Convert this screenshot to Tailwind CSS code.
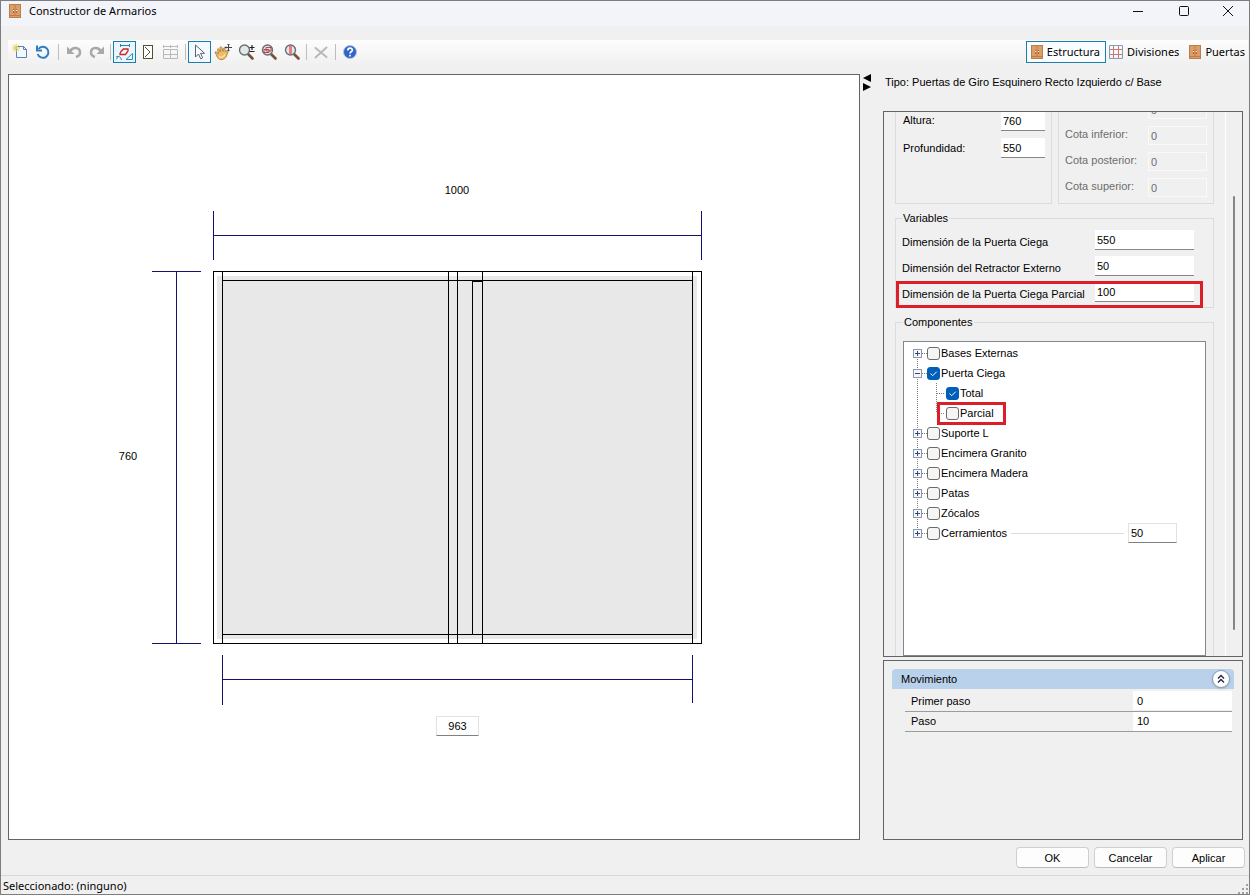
<!DOCTYPE html>
<html lang="es">
<head>
<meta charset="utf-8">
<title>Constructor de Armarios</title>
<script src="https://cdn.jsdelivr.net/npm/@tailwindcss/browser@4"></script>
</head>
<body class="h-screen overflow-hidden bg-[#f0f0f0] text-black font-['Liberation_Sans',sans-serif] text-[11px] leading-4">
<svg width="0" height="0" class="absolute">
  <defs>
    <symbol id="wardrobe" viewBox="0 0 12 16">
      <rect x=".5" y="1.5" width="11" height="13" fill="#dd9d66" stroke="#b87f4e"/>
      <path d="M6 2v10M1 12.5h10" stroke="#c07c48"/>
      <path d="M4.500 6v4M7.500 6v4" stroke="#a9683a"/>
      <path d="M4 7.500h1M7 7.500h1" stroke="#fff"/>
    </symbol>
    <symbol id="lens" viewBox="0 0 18 18">
      <path d="M11.500 11.500l4 4" stroke="#75503a" stroke-width="2.600" stroke-linecap="round"/>
      <circle cx="7.500" cy="7" r="5" fill="#dfe9ec" stroke="#6a6e70" stroke-width="1.400"/>
    </symbol>
  </defs>
</svg>
<div class="flex h-full flex-col border border-[#7d7d7d]">
  <header class="flex h-[25px] shrink-0 items-center bg-[#f2f4fa] pl-2 font-['Noto_Sans',sans-serif] text-[11px]">
    <svg class="mb-[6px] h-4 w-3"><use href="#wardrobe"/></svg>
    <h1 class="mb-[6px] ml-2">Constructor de Armarios</h1>
    <div class="mb-[6px] ml-auto flex">
      <button aria-label="Minimizar" class="flex w-[46px] justify-center"><svg width="12" height="12" stroke="#111" fill="none"><path d="M1 6.500h10"/></svg></button>
      <button aria-label="Maximizar" class="flex w-[45px] justify-center"><svg width="12" height="12" stroke="#111" fill="none"><rect x="1.500" y="1.500" width="9" height="9" rx="1"/></svg></button>
      <button aria-label="Cerrar" class="flex w-[43px] justify-center"><svg width="12" height="12" stroke="#111" fill="none"><path d="M1 1l10 10M11 1L1 11"/></svg></button>
    </div>
  </header>

  <nav class="ml-[7px] mr-px mt-[14px] flex h-[24px] shrink-0 items-center bg-linear-to-b from-[#fdfdfd] to-[#f1f1f1]" aria-label="Herramientas">
    <button aria-label="Nuevo" class="flex h-[22px] w-[23px] items-center justify-center"><svg width="16" height="16" fill="none"><path d="M4.500 2.500h7l3 3v8h-10z" fill="#f3f8fd" stroke="#5b84b5"/><path d="M11.500 2.500v3h3" stroke="#5b84b5"/><path d="M4 0v8M0 4h8M1 1l6 6M7 1L1 7" stroke="#e3cf45"/></svg></button>
    <button aria-label="Actualizar" class="flex h-[22px] w-[23px] items-center justify-center"><svg width="16" height="16" fill="none" stroke="#2b7fc4" stroke-width="2"><path d="M3.500 5a5.500 5.500 0 1 1-.8 5"/><path d="M2 1.500v5h5"/></svg></button>
    <span class="flex h-4 w-[8px] justify-center"><i class="w-px bg-[#bdbdbd]"></i></span>
    <button aria-label="Deshacer" class="flex h-[22px] w-[23px] items-center justify-center"><svg width="16" height="16" fill="none" stroke="#a9a9a9" stroke-width="2.500"><path d="M4 7.500C7 2 14 3.500 14 8.500c0 2-1.500 3.700-4 4.500"/><path d="M1 2.500v7.500h7.500z" fill="#a9a9a9" stroke="none"/></svg></button>
    <button aria-label="Rehacer" class="flex h-[22px] w-[23px] items-center justify-center"><svg width="16" height="16" fill="none" stroke="#a9a9a9" stroke-width="2.500"><path d="M12 7.500C9 2 2 3.500 2 8.500c0 2 1.500 3.700 4 4.500"/><path d="M15 2.500v7.500H7.500z" fill="#a9a9a9" stroke="none"/></svg></button>
    <span class="flex h-4 w-[5px] justify-center"><i class="w-px bg-[#bdbdbd]"></i></span>
    <button aria-label="Cotas" aria-pressed="true" class="flex h-[22px] w-[23px] items-center justify-center border border-[#1a7fae] bg-[#eaf6fb]"><svg width="18" height="18" fill="none"><path d="M4.500 1v3M13.500 1v3M4.500 2.500h9" stroke="#2a7fb8"/><path d="M4 10.500l1-2L7.500 6H12v2l-2.500 3.500H4z" stroke="#d02525" stroke-width="1.300"/><path d="M0 14c3-1.500 5 0 5.500 3M0 16.500l2.500-3M10 16.500h6.500v-6z" stroke="#2a8fb8"/></svg></button>
    <button aria-label="Puerta" class="flex h-[22px] w-[23px] items-center justify-center"><svg width="12" height="16" fill="none"><rect x="1.500" y="1.500" width="9" height="13" fill="#fff" stroke="#4d5230"/><path d="M3 3l5 5-5 5" stroke="#4d5230"/></svg></button>
    <button aria-label="Cuadrícula" class="flex h-[22px] w-[23px] items-center justify-center"><svg width="17" height="17" fill="none" stroke="#b9b9b9"><path d="M1.500 5.500h14v9h-14zM8.500 5v10M1.500 10.500h14M1 2.500h15M1.500 1v3M8.500 1v3M15.500 1v3"/></svg></button>
    <span class="flex h-4 w-[6px] justify-center"><i class="w-px bg-[#bdbdbd]"></i></span>
    <button aria-label="Seleccionar" aria-pressed="true" class="flex h-[22px] w-[23px] items-center justify-center border border-[#1a7fae] bg-[#f3fafd]"><svg width="12" height="18" fill="#fff" stroke="#5a6080"><path d="M1.500 2v12l3-3 2.200 4.800 2-1L6.500 10.300h4z"/></svg></button>
    <button aria-label="Mover vista" class="flex h-[22px] w-[23px] items-center justify-center"><svg width="18" height="18" fill="none"><path d="M1 9c1.500-.6 2.500.6 3.500 2L3.500 6.500c0-1 1.200-1.200 1.600-.2L6.500 9 6 4.500c.2-1 1.500-1 1.800 0L9 8.500l.2-3c.5-1 1.500-.7 1.600.3L11.500 9l1.200-1.500c1-.6 1.800.2 1.400 1.200L12.500 13c-1.500 4-7 5-9 1.500C2.500 13 2 10.500 1 9z" fill="#edbd6a" stroke="#a8752f" stroke-width=".8"/><path d="M5 13.500c2 1.500 5 .5 6-2" stroke="#fbe6b4" stroke-width="1.300"/><path d="M14.500 1v7M11 4.500h7M13.500 2l1-1 1 1M13.500 7l1 1 1-1M12 3.500l-1 1 1 1" stroke="#444"/></svg></button>
    <button aria-label="Acercar o alejar" class="flex h-[22px] w-[23px] items-center justify-center"><svg width="18" height="18"><use href="#lens"/><path d="M12.500 4.500h5M15 2v5M12.500 8.500h5" stroke="#222" stroke-width="1.200"/></svg></button>
    <button aria-label="Ampliar ventana" class="flex h-[22px] w-[23px] items-center justify-center"><svg width="18" height="18"><use href="#lens"/><path d="M6 4.500h5v3.500H6zM4 6.500h5v3H4z" fill="#f4dede" stroke="#b5484e"/></svg></button>
    <button aria-label="Ampliar todo" class="flex h-[22px] w-[23px] items-center justify-center"><svg width="18" height="18"><use href="#lens"/><path d="M6 3h3v8H6z" fill="#ec7d7d"/></svg></button>
    <span class="flex h-4 w-[6px] justify-center"><i class="w-px bg-[#bdbdbd]"></i></span>
    <button aria-label="Eliminar" class="flex h-[22px] w-[23px] items-center justify-center"><svg width="16" height="16" stroke="#b9b9b9" stroke-width="2" stroke-linecap="round"><path d="M2.500 4l11 9M13.500 3.500l-11 10"/></svg></button>
    <span class="flex h-4 w-[6px] justify-center"><i class="w-px bg-[#bdbdbd]"></i></span>
    <button aria-label="Ayuda" class="flex h-[22px] w-[23px] items-center justify-center"><svg width="16" height="16" fill="none"><circle cx="8" cy="8" r="6.500" fill="#2f64c8" stroke="#b4c3e0"/><path d="M5.800 6.500c0-3 4.600-3 4.600-.4C10.400 7.800 8 7.800 8 9.600M8 10.800v1.700" stroke="#fff" stroke-width="1.700"/></svg></button>
    <div class="ml-auto flex items-center gap-[2px] font-['Noto_Sans',sans-serif] text-[11px]">
      <button aria-pressed="true" class="flex h-[22px] items-center gap-1 border border-[#1a7fae] bg-[#fafdff] pl-1 pr-[5px]"><svg class="h-4 w-3"><use href="#wardrobe"/></svg>Estructura</button>
      <button class="flex h-[22px] items-center gap-1 px-px"><svg width="14" height="14" fill="none"><path d="M4.500 1v12M9.500 1v12M1 4.500h12M1 9.500h12" stroke="#cf7777"/><path d="M.5 .5h13v13H.5z" stroke="#7f9fc0"/></svg>Divisiones</button>
      <button class="ml-[7px] flex h-[22px] items-center gap-1 pr-[3px]"><svg class="h-4 w-3"><use href="#wardrobe"/></svg>Puertas</button>
    </div>
  </nav>

  <main class="mt-[10px] flex min-h-0 grow pl-[7px] pr-[6px]">
    <section class="relative min-w-0 grow border border-[#646464] bg-white" aria-label="Vista frontal">
      <svg class="block h-full w-full" fill="none" shape-rendering="crispEdges">
        <path d="M208 201h480v363H208z" fill="#e8e8e8"/>
        <g stroke="#000">
          <path d="M204.500 196.500h488v372h-488zM213.500 196.500v372M683.500 196.500v372M213.500 205.500h470M213.500 559.500h470"/>
          <path d="M439.500 196.500v372M448.500 196.500v372M473.500 196.500v372M463.500 559.500v-353h10"/>
        </g>
        <g stroke="#12126e">
          <path d="M204.500 136v49M692.500 136v49M204.500 160.500h488"/>
          <path d="M143 196.500h49M143 568.500h49M167.500 196.500v372"/>
          <path d="M213.500 580v50M683.500 580v48M213.500 604.500h470"/>
        </g>
        <g fill="#000" font-size="11" text-anchor="middle">
          <text x="448" y="119">1000</text>
          <text x="119" y="385">760</text>
        </g>
      </svg>
      <input aria-label="Anchura útil" value="963" class="absolute left-[427px] top-[641px] h-5 w-[43px] border border-[#e2e2e2] border-b-[#808080] bg-white text-center">
    </section>

    <div class="flex w-[23px] shrink-0 flex-col items-start pl-[2px]" aria-hidden="true">
      <svg width="10" height="18" fill="#000"><path d="M9 0v8L1 4zM1 9v8l8-4z"/></svg>
    </div>

    <aside class="flex w-[360px] shrink-0 flex-col">
      <p class="h-[37px] shrink-0 pl-[2px]">Tipo: Puertas de Giro Esquinero Recto Izquierdo c/ Base</p>
      <form class="flex min-h-0 grow overflow-hidden border border-[#646464] pl-[11px]">
        <div class="flex min-w-0 grow flex-col pr-[11px]">
          <div class="flex h-[92px] shrink-0 gap-[6px]">
            <div class="flex flex-1 flex-col gap-[7px] border-x border-b border-[#dcdcdc] pl-[7px] pr-[6px]">
              <div class="flex h-[19px] items-start justify-between"><label for="alt">Altura:</label><input id="alt" value="760" class="h-[19px] w-11 border-b border-[#868686] bg-white px-[2px]"></div>
              <div class="flex h-5 items-center justify-between"><label for="prof">Profundidad:</label><input id="prof" value="550" class="h-5 w-11 border-b border-[#868686] bg-white px-[2px]"></div>
            </div>
            <div class="flex flex-1 flex-col gap-[7px] border-x border-b border-[#dcdcdc] pl-[6px] pr-[6px] text-[#6d6d6d]">
              <div class="flex h-[7px] items-end justify-end overflow-hidden"><input aria-label="Cota lateral" disabled value="0" class="h-[19px] w-[59px] shrink-0 border border-[#fafafa] px-[2px]"></div>
              <div class="flex h-[19px] items-start justify-between"><label for="c1">Cota inferior:</label><input id="c1" disabled value="0" class="h-[19px] w-[59px] border border-[#fafafa] px-[2px]"></div>
              <div class="flex h-[19px] items-start justify-between"><label for="c2">Cota posterior:</label><input id="c2" disabled value="0" class="h-[19px] w-[59px] border border-[#fafafa] px-[2px]"></div>
              <div class="flex h-[19px] items-start justify-between"><label for="c3">Cota superior:</label><input id="c3" disabled value="0" class="h-[19px] w-[59px] border border-[#fafafa] px-[2px]"></div>
            </div>
          </div>
          <fieldset class="relative mt-[6px] shrink-0 border border-[#dcdcdc] pb-[5px] pl-[6px] pr-[19px]">
            <legend class="px-px">Variables</legend>
            <div class="mt-1 flex flex-col gap-[6px]">
              <div class="flex h-5 items-end justify-between"><label for="v1">Dimensión de la Puerta Ciega</label><input id="v1" value="550" class="h-5 w-[99px] border-b border-[#868686] bg-white px-[2px]"></div>
              <div class="flex h-5 items-end justify-between"><label for="v2">Dimensión del Retractor Externo</label><input id="v2" value="50" class="h-5 w-[99px] border-b border-[#868686] bg-white px-[2px]"></div>
              <div class="flex h-5 items-end justify-between"><label for="v3">Dimensión de la Puerta Ciega Parcial</label><input id="v3" value="100" class="h-5 w-[99px] border-b border-[#868686] bg-white px-[2px]"></div>
            </div>
            <div class="absolute -bottom-px left-0 right-[10px] h-[27px] border-3 border-[#dc1e28]"></div>
          </fieldset>
          <fieldset class="mt-[6px] flex min-h-0 grow flex-col border-x border-t border-[#dcdcdc] px-[7px]">
            <legend class="px-px">Componentes</legend>
            <ul id="tree" class="mt-[11px] h-[315px] overflow-hidden border border-[#828790] bg-white pl-[9px] pt-px"></ul>
          </fieldset>
        </div>
        <div class="flex w-[17px] shrink-0 border-l border-white pl-[7px]"><i class="mb-[26px] mt-[84px] w-[2px] rounded bg-[#858585]"></i></div>
      </form>

      <section class="mt-[3px] h-[180px] shrink-0 border border-[#646464] px-2 pt-2">
        <div class="flex h-5 items-center justify-between rounded-t bg-[#b9d1ea] pl-[9px] pr-1">
          <h2>Movimiento</h2>
          <button aria-label="Contraer" class="flex size-[18px] items-center justify-center rounded-full border border-[#8c9bb5] bg-white shadow-sm"><svg width="10" height="10" fill="none" stroke="#1d2440" stroke-width="1.300"><path d="M2 4.500l3-3 3 3M2 8.500l3-3 3 3"/></svg></button>
        </div>
        <table class="ml-[13px] mt-[2px] w-[327px] border-collapse">
          <tr class="h-5 border-b border-[#9c9c9c]"><th class="p-0 pl-[6px] text-left font-normal"><label for="m1">Primer paso</label></th><td class="w-[99px] p-0"><input id="m1" value="0" class="block h-[19px] w-full bg-white px-1"></td></tr>
          <tr class="h-5 border-b border-[#9c9c9c]"><th class="p-0 pl-[6px] text-left font-normal"><label for="m2">Paso</label></th><td class="w-[99px] p-0"><input id="m2" value="10" class="block h-[19px] w-full bg-white px-1"></td></tr>
        </table>
      </section>
    </aside>
  </main>

  <div class="flex h-[35px] shrink-0 justify-end gap-[5px] pr-1 pt-[7px]">
    <button class="h-[21px] w-[73px] rounded border border-[#cfcfcf] border-b-[#bdbdbd] bg-[#fdfdfd]">OK</button>
    <button class="h-[21px] w-[73px] rounded border border-[#cfcfcf] border-b-[#bdbdbd] bg-[#fdfdfd]">Cancelar</button>
    <button class="h-[21px] w-[73px] rounded border border-[#cfcfcf] border-b-[#bdbdbd] bg-[#fdfdfd]">Aplicar</button>
  </div>
  <footer class="flex h-[19px] shrink-0 items-end justify-between border-t border-[#d7d7d7] pl-[2px] font-['Noto_Sans',sans-serif] text-[11px]">
    <span>Seleccionado: (ninguno)</span>
    <svg width="11" height="11" fill="#a0a0a0"><path d="M8 1h2v2H8zM4 5h2v2H4zM8 5h2v2H8zM0 9h2v2H0zM4 9h2v2H4zM8 9h2v2H8z"/></svg>
  </footer>
</div>

<script>
const items = [
  { name: 'Bases Externas', sign: '+' },
  { name: 'Puerta Ciega', sign: '-', on: true },
  { name: 'Total', child: true, on: true },
  { name: 'Parcial', child: true, mark: true },
  { name: 'Suporte L', sign: '+' },
  { name: 'Encimera Granito', sign: '+' },
  { name: 'Encimera Madera', sign: '+' },
  { name: 'Patas', sign: '+' },
  { name: 'Zócalos', sign: '+' },
  { name: 'Cerramientos', sign: '+', value: '50' },
];
document.getElementById('tree').innerHTML = items.map((it, i) => {
  const first = i === 0, last = i === items.length - 1;
  const trunk = `<path d="M4.500 ${first ? 10 : 0}V${last ? 10 : 20}" stroke="#808080" stroke-dasharray="1 1"/>`;
  const lines = it.child
    ? `<svg width="33" height="20" fill="none">${trunk}<path d="M23.500 0V${it.mark ? 10 : 20}M24 10.500h8" stroke="#808080" stroke-dasharray="1 1"/></svg>`
    : `<svg width="14" height="20" fill="none">${trunk}<path d="M9 10.500h5" stroke="#808080" stroke-dasharray="1 1"/><rect x=".5" y="6.500" width="8" height="8" fill="#f6f7fa" stroke="#8f98ab"/><path d="M2 10.500h5${it.sign === '+' ? 'M4.500 8v5' : ''}" stroke="#2f4a86"/></svg>`;
  const mark = it.mark ? '<span class="absolute -top-px left-[24px] h-[23px] w-[69px] border-3 border-[#dc1e28]"></span>' : '';
  const extra = it.value ? '<span class="mx-1 h-px grow bg-[#dcdcdc]"></span><input aria-label="Valor de Cerramientos" value="50" class="mr-[28px] h-5 w-[49px] border border-[#e2e2e2] border-b-[#808080] bg-white px-[2px]">' : '';
  return `<li class="relative flex h-5 items-center">${lines}<input type="checkbox" id="t${i}" ${it.on ? 'checked' : ''} class="peer size-[13px] shrink-0 appearance-none rounded-[3px] border border-[#6a6a6a] bg-[#f5f5f5] checked:border-[#005fb8] checked:bg-[#005fb8]"><svg width="13" height="13" fill="none" class="pointer-events-none invisible -ml-[13px] shrink-0 peer-checked:visible"><path d="M3.500 6.500l2.200 2.200 4-4" stroke="#fff"/></svg><label for="t${i}" class="ml-px">${it.name}</label>${extra}${mark}</li>`;
}).join('');
</script>
</body>
</html>
